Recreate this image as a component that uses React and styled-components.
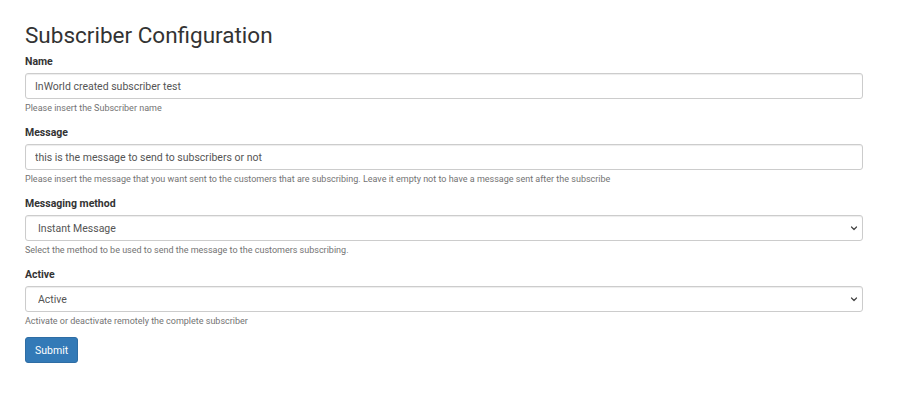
import React, { useState } from "react";
import styled, { createGlobalStyle } from "styled-components";

const GlobalStyle = createGlobalStyle`
  html, body {
    margin: 0;
    padding: 0;
    background: #fff;
  }
  body {
    font-family: Roboto, "Helvetica Neue", Arial, sans-serif;
    color: #333;
  }
`;

const Page = styled.div`
  padding: 22px 37px 40px 25px;
`;

const Title = styled.h1`
  margin: 0 0 6px;
  font-size: 22.5px;
  font-weight: 400;
  line-height: 26px;
  color: #333;
`;

const Group = styled.div`
  display: flex;
  flex-direction: column;
  margin-bottom: ${(p) => (p.$last ? "10px" : "11px")};
`;

const Label = styled.label`
  font-size: 10.5px;
  font-weight: 700;
  line-height: 16px;
  margin-bottom: 3px;
  color: #333;
`;

const fieldBase = `
  box-sizing: border-box;
  width: 100%;
  height: 26px;
  border: 1px solid #ccc;
  border-radius: 3px;
  background: #fff;
  box-shadow: inset 0 1px 1px rgba(0, 0, 0, 0.075);
  font-family: Roboto, "Helvetica Neue", Arial, sans-serif;
  font-size: 10.5px;
  color: #555;
  outline: none;
`;

const TextInput = styled.input`
  ${fieldBase}
  padding: 0 9px;
`;

const SelectWrap = styled.div`
  position: relative;
`;

const Select = styled.select`
  ${fieldBase}
  appearance: none;
  -webkit-appearance: none;
  padding: 0 24px 0 12px;
`;

const Chevron = styled.svg`
  position: absolute;
  right: 5px;
  top: 50%;
  width: 8px;
  height: 8px;
  margin-top: -4px;
  pointer-events: none;
`;

const Help = styled.span`
  display: block;
  margin-top: 3px;
  font-size: 9px;
  line-height: 12px;
  color: #737373;
`;

const SubmitButton = styled.button`
  box-sizing: border-box;
  height: 26px;
  padding: 0 9px;
  border: 1px solid #2e6da4;
  border-radius: 3px;
  background: #337ab7;
  color: #fff;
  font-family: Roboto, "Helvetica Neue", Arial, sans-serif;
  font-size: 10.5px;
  cursor: pointer;
`;

const SelectField = ({ value, onChange, options }) => (
  <SelectWrap>
    <Select value={value} onChange={(e) => onChange(e.target.value)}>
      {options.map((o) => (
        <option key={o}>{o}</option>
      ))}
    </Select>
    <Chevron viewBox="0 0 16 16">
      <path d="M3 6l5 5 5-5" fill="none" stroke="#444" strokeWidth="2.4" strokeLinecap="round" strokeLinejoin="round" />
    </Chevron>
  </SelectWrap>
);

export default function App() {
  const [name, setName] = useState("InWorld created subscriber test");
  const [message, setMessage] = useState("this is the message to send to subscribers or not");
  const [method, setMethod] = useState("Instant Message");
  const [active, setActive] = useState("Active");

  return (
    <Page>
      <GlobalStyle />
      <Title>Subscriber Configuration</Title>
      <form onSubmit={(e) => e.preventDefault()}>
        <Group>
          <Label>Name</Label>
          <TextInput value={name} onChange={(e) => setName(e.target.value)} />
          <Help>Please insert the Subscriber name</Help>
        </Group>
        <Group>
          <Label>Message</Label>
          <TextInput value={message} onChange={(e) => setMessage(e.target.value)} />
          <Help>
            Please insert the message that you want sent to the customers that are subscribing. Leave it empty not to have a message sent after the subscribe
          </Help>
        </Group>
        <Group>
          <Label>Messaging method</Label>
          <SelectField value={method} onChange={setMethod} options={["Instant Message", "Email", "SMS"]} />
          <Help>Select the method to be used to send the message to the customers subscribing.</Help>
        </Group>
        <Group $last>
          <Label>Active</Label>
          <SelectField value={active} onChange={setActive} options={["Active", "Inactive"]} />
          <Help>Activate or deactivate remotely the complete subscriber</Help>
        </Group>
        <SubmitButton type="submit">Submit</SubmitButton>
      </form>
    </Page>
  );
}
